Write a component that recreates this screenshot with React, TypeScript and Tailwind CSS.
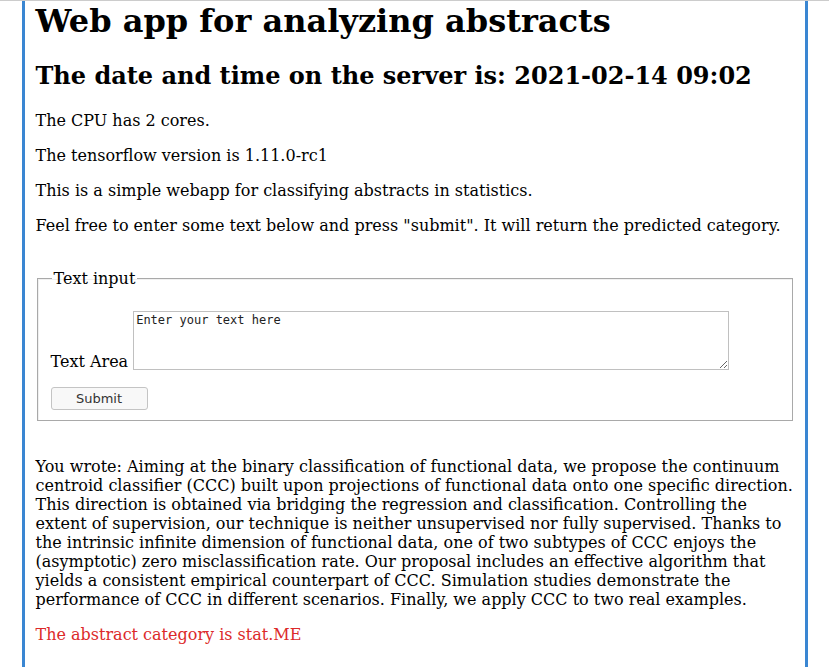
const App = () => {
  return (
    <div className="min-h-screen bg-white border-t border-[#cccccc] font-['DejaVu_Serif',serif] text-[16px] text-black leading-[normal]">
      <div className="w-[786px] mx-auto min-h-[666px] border-x-[3px] border-[#3a86d2] px-[11px] pb-4">
        <h1 className="text-[32px] leading-[normal] font-bold pt-px mb-[21px]">Web app for analyzing abstracts</h1>
        <h2 className="text-[24px] leading-[normal] font-bold mb-[21px]">
          The date and time on the server is: 2021-02-14 09:02
        </h2>
        <p className="mb-4">The CPU has 2 cores.</p>
        <p className="mb-4">The tensorflow version is 1.11.0-rc1</p>
        <p className="mb-4">This is a simple webapp for classifying abstracts in statistics.</p>
        <p className="mb-4">
          Feel free to enter some text below and press "submit". It will return the predicted category.
        </p>

        <form className="mt-[34px]">
          <fieldset className="mx-px border border-[#a9a9a9] shadow-[inset_1px_1px_0_#f0f0f0] px-[13px] pt-[23px] pb-[10px]">
            <legend className="px-0.5 ml-px">Text input</legend>
            <div className="flex items-end gap-[5px]">
              <label className="leading-[19px] -mb-[1px]">Text Area</label>
              <textarea
                className="w-[596px] h-[59px] border border-[#c0c0c0] px-[2px] py-[1px] font-['DejaVu_Sans_Mono',monospace] text-[12px] leading-[14px] text-[#222] outline-none"
                defaultValue="Enter your text here"
              />
            </div>
            <button
              type="button"
              className="mt-[17px] w-[97px] h-[23px] rounded-[3px] border border-[#c4c4c4] bg-[#f8f8f8] font-['DejaVu_Sans',sans-serif] text-[13px] leading-[normal] text-[#333]"
            >
              Submit
            </button>
          </fieldset>
        </form>

        <p className="mt-[36px] mb-4">
          You wrote: Aiming at the binary classification of functional data, we propose the continuum centroid
          classifier (CCC) built upon projections of functional data onto one specific direction. This direction is
          obtained via bridging the regression and classification. Controlling the extent of supervision, our technique
          is neither unsupervised nor fully supervised. Thanks to the intrinsic infinite dimension of functional data,
          one of two subtypes of CCC enjoys the (asymptotic) zero misclassification rate. Our proposal includes an
          effective algorithm that yields a consistent empirical counterpart of CCC. Simulation studies demonstrate the
          performance of CCC in different scenarios. Finally, we apply CCC to two real examples.
        </p>
        <p className="text-[#dc2a2a]">The abstract category is stat.ME</p>
      </div>
    </div>
  )
}

export default App
